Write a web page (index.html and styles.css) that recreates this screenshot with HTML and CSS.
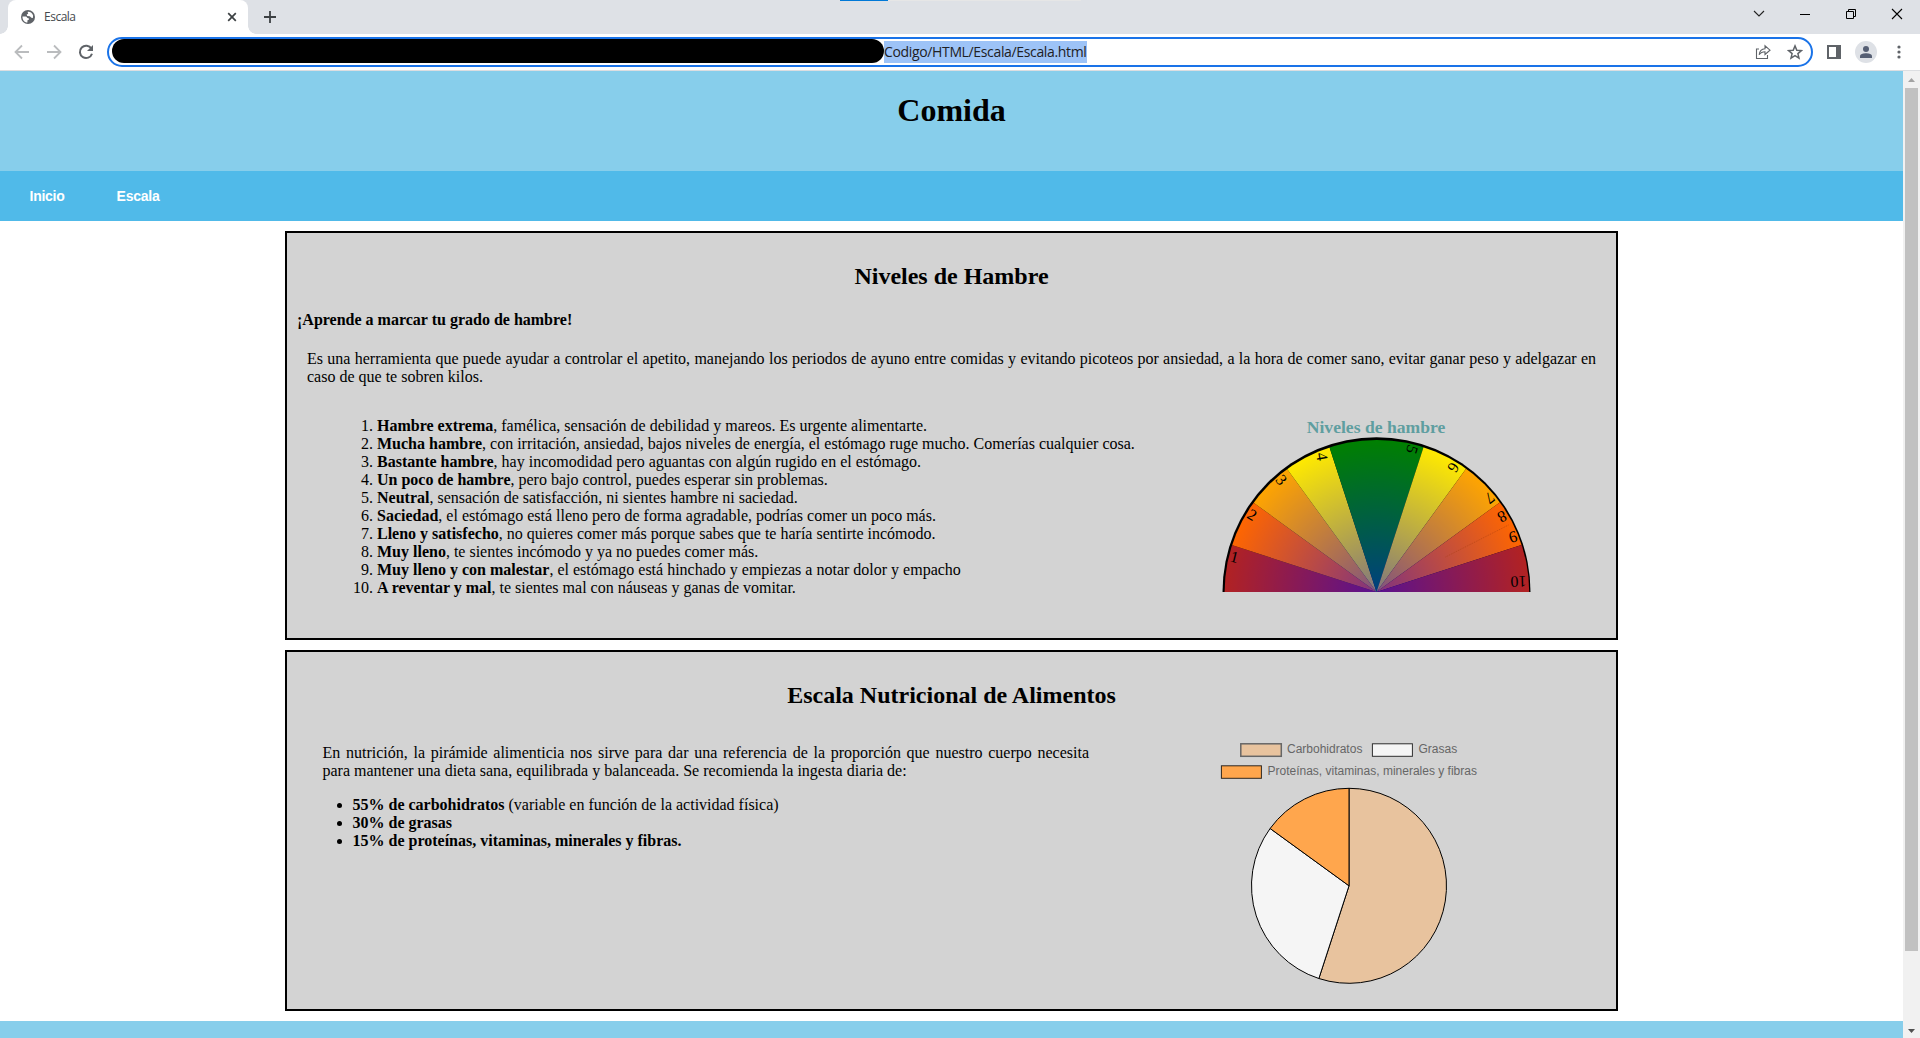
FILE: index.html
```html
<!DOCTYPE html>
<html lang="es">
<head>
<meta charset="utf-8">
<title>Escala</title>
<link rel="stylesheet" href="styles.css">
</head>
<body>
<div class="tabstrip">
  <div class="tab">
    <svg class="globe" width="14" height="14" viewBox="0 0 14 14"><circle cx="7" cy="7" r="7" fill="#5f6368"/><path d="M1.500 6.400H5.200l1.300 1.700 1.500.4-.2 1.300-1.300.5-.1 2.200C3.300 12.200 1.300 9.600 1.500 6.400z" fill="#fff"/><path d="M6.600 1.900c2.300-.5 4.800 1.200 5.500 3.500l-.2 2.500-1.500-.2-1.600-1.400L6.200 6 5.700 4.400l1.500-.7z" fill="#fff"/></svg>
    <span class="tab-title">Escala</span>
    <svg width="10" height="10" viewBox="0 0 10 10"><path d="M1.200 1.200l7.600 7.600M8.800 1.200L1.200 8.800" stroke="#3c4043" stroke-width="1.700"/></svg>
  </div>
  <svg class="newtab" width="12" height="12" viewBox="0 0 12 12"><path d="M6 0v12M0 6h12" stroke="#3c4043" stroke-width="1.800"/></svg>
  <div class="wincontrols">
    <svg width="12" height="12" viewBox="0 0 12 12"><path d="M1 3l5 5 5-5" fill="none" stroke="#222" stroke-width="1.100"/></svg>
    <svg width="12" height="12" viewBox="0 0 12 12"><path d="M1 6.500h10" stroke="#000"/></svg>
    <svg width="12" height="12" viewBox="0 0 12 12"><path d="M1.500 3.500h7v7h-7zM3.500 3.500v-2h7v7h-2" fill="none" stroke="#000"/></svg>
    <svg width="12" height="12" viewBox="0 0 12 12"><path d="M1 1l10 10M11 1L1 11" stroke="#000" stroke-width="1.100"/></svg>
  </div>
  <div class="loading"><i></i></div>
</div>
<div class="toolbar">
  <svg width="16" height="16" viewBox="0 0 16 16"><path d="M15 8H2M8 1.500L1.500 8 8 14.500" fill="none" stroke="#babcbe" stroke-width="1.800"/></svg>
  <svg width="16" height="16" viewBox="0 0 16 16"><path d="M1 8h13M8 1.500L14.500 8 8 14.500" fill="none" stroke="#babcbe" stroke-width="1.800"/></svg>
  <svg width="16" height="16" viewBox="0 0 16 16"><path d="M13.400 4.600A6.200 6.200 0 1 0 14 9.800" fill="none" stroke="#5f6368" stroke-width="2"/><path d="M15 1v6H9z" fill="#5f6368"/></svg>
  <div class="omnibox">
    <div class="redacted"></div>
    <span class="url">Codigo/HTML/Escala/Escala.html</span>
    <svg class="share" width="16" height="16" viewBox="0 0 16 16"><path d="M4 5H1.500v9.500h11V11" fill="none" stroke="#5f6368" stroke-width="1.100"/><path d="M4.200 10.800C4.600 7 6.600 5 10 4.800V1.800l5 4.400-5 4.300V7.700c-2.800 0-4.500 1-5.800 3.100z" fill="none" stroke="#5f6368" stroke-width="1.100"/></svg>
    <svg width="16" height="16" viewBox="0 0 16 16"><path d="M8 1.900l1.800 4.300 4.600.4-3.500 3 1.100 4.500-4-2.400-4 2.400 1.100-4.500-3.500-3 4.600-.4z" fill="none" stroke="#5f6368" stroke-width="1.500"/></svg>
  </div>
  <svg class="panel" width="14" height="14" viewBox="0 0 14 14"><path d="M0 0h14v14H0zM2 2v10h7V2z" fill="#5f6368" fill-rule="evenodd"/></svg>
  <svg class="avatar" width="22" height="22" viewBox="0 0 22 22"><circle cx="11" cy="11" r="11" fill="#dee1e6"/><circle cx="11" cy="8" r="3" fill="#565f74"/><path d="M5 17v-1.800C5 13 8.500 12.300 11 12.300s6 .7 6 2.900V17z" fill="#565f74"/></svg>
  <svg class="dots" width="4" height="14" viewBox="0 0 4 14"><g fill="#5f6368"><circle cx="2" cy="2" r="1.600"/><circle cx="2" cy="7" r="1.600"/><circle cx="2" cy="12" r="1.600"/></g></svg>
</div>
<div class="viewport">
  <div class="page">
    <header class="banner"><h1>Comida</h1></header>
    <nav class="menu"><a>Inicio</a><a>Escala</a></nav>
    <section class="card levels">
      <h2>Niveles de Hambre</h2>
      <h4>¡Aprende a marcar tu grado de hambre!</h4>
      <p class="intro">Es una herramienta que puede ayudar a controlar el apetito, manejando los periodos de ayuno entre comidas y evitando picoteos por ansiedad, a la hora de comer sano, evitar ganar peso y adelgazar en caso de que te sobren kilos.</p>
      <div class="columns">
        <ol>
          <li><b>Hambre extrema</b>, famélica, sensación de debilidad y mareos. Es urgente alimentarte.</li>
          <li><b>Mucha hambre</b>, con irritación, ansiedad, bajos niveles de energía, el estómago ruge mucho. Comerías cualquier cosa.</li>
          <li><b>Bastante hambre</b>, hay incomodidad pero aguantas con algún rugido en el estómago.</li>
          <li><b>Un poco de hambre</b>, pero bajo control, puedes esperar sin problemas.</li>
          <li><b>Neutral</b>, sensación de satisfacción, ni sientes hambre ni saciedad.</li>
          <li><b>Saciedad</b>, el estómago está lleno pero de forma agradable, podrías comer un poco más.</li>
          <li><b>Lleno y satisfecho</b>, no quieres comer más porque sabes que te haría sentirte incómodo.</li>
          <li><b>Muy lleno</b>, te sientes incómodo y ya no puedes comer más.</li>
          <li><b>Muy lleno y con malestar</b>, el estómago está hinchado y empiezas a notar dolor y empacho</li>
          <li><b>A reventar y mal</b>, te sientes mal con náuseas y ganas de vomitar.</li>
        </ol>
        <div class="gauge">
          <div class="gauge-title">Niveles de hambre</div>
          <svg class="dial" width="310" height="155" viewBox="-155.5 -155 310 155">
            <defs>
              <radialGradient id="core" gradientUnits="userSpaceOnUse" cx="0" cy="0" r="153"><stop offset="0" stop-color="#00f" stop-opacity=".5"/><stop offset="1" stop-color="#00f" stop-opacity="0"/></radialGradient>
              <clipPath id="half"><circle cx="0.400" cy="0.200" r="152.300"/></clipPath>
            </defs>
            <ellipse rx="154" ry="154.800"/>
            <g clip-path="url(#half)">
              <path fill="#b22222" d="M0 0H-170V-55.200z"/>
              <path fill="#ff6600" d="M0 0L-170-55.200V-123.500z"/>
              <path fill="#ffa500" d="M0 0L-170-123.500-140-192.700z"/>
              <path fill="#ffea00" d="M0 0L-140-192.700-62.600-192.700z"/>
              <path fill="#008000" d="M0 0L-62.600-192.700H62.600z"/>
              <path fill="#ffea00" d="M0 0L62.600-192.700H140z"/>
              <path fill="#ffa500" d="M0 0L140-192.700 170-123.500z"/>
              <path fill="#ff6600" d="M0 0L170-123.500V-55.200z"/>
              <path fill="#b22222" d="M0 0L170-55.200V0z"/>
              <rect x="-155" y="-155" width="310" height="155" fill="url(#core)"/>
              <path d="M69-35L132-67" stroke="#a33c10" stroke-width=".5" stroke-dasharray="1 1"/>
            </g>
            <g class="marks">
              <text transform="translate(-142 -35) rotate(14)" y="5.300">1</text>
              <text transform="translate(-124.500 -77) rotate(30)" y="5.300">2</text>
              <text transform="translate(-95 -112) rotate(50)" y="5.300">3</text>
              <text transform="translate(-54.500 -135.500) rotate(80)" y="5.300">4</text>
              <text transform="translate(35.500 -142.500) rotate(108)" y="5.300">5</text>
              <text transform="translate(77 -124.500) rotate(122)" y="5.300">6</text>
              <text transform="translate(113 -94) rotate(142)" y="5.300">7</text>
              <text transform="translate(125.500 -75.500) rotate(153)" y="5.300">8</text>
              <text transform="translate(136.500 -55) rotate(163)" y="5.300">9</text>
              <text transform="translate(142 -10.500) rotate(178)" y="5.300">10</text>
            </g>
          </svg>
        </div>
      </div>
    </section>
    <section class="card nutrition">
      <h2>Escala Nutricional de Alimentos</h2>
      <div class="columns">
        <div class="advice">
          <p>En nutrición, la pirámide alimenticia nos sirve para dar una referencia de la proporción que nuestro cuerpo necesita para mantener una dieta sana, equilibrada y balanceada. Se recomienda la ingesta diaria de:</p>
          <ul>
            <li><b>55% de carbohidratos</b> (variable en función de la actividad física)</li>
            <li><b>30% de grasas</b></li>
            <li><b>15% de proteínas, vitaminas, minerales y fibras.</b></li>
          </ul>
        </div>
        <svg class="pie" width="300" height="255" viewBox="0 0 300 255">
          <g stroke="#000" stroke-opacity=".8">
            <rect x="40.800" y="3.800" width="40.500" height="12.500" fill="#e8c39e" stroke="#666" stroke-opacity="1" stroke-width="1.500"/>
            <rect x="172.400" y="3.800" width="40" height="12.500" fill="#f5f5f5"/>
            <rect x="21.400" y="25.800" width="40" height="12.500" fill="#ffa64d"/>
          </g>
          <g class="legend">
            <text x="87" y="13">Carbohidratos</text>
            <text x="218.500" y="13">Grasas</text>
            <text x="67.500" y="35">Proteínas, vitaminas, minerales y fibras</text>
          </g>
          <g transform="translate(149 145.800)" stroke="#000" stroke-linejoin="round">
            <path fill="#e8c39e" d="M0 0V-97.500A97.500 97.500 0 1 1-30.130 92.730z"/>
            <path fill="#f5f5f5" d="M0 0L-30.130 92.730A97.500 97.500 0 0 1-78.880-57.310z"/>
            <path fill="#ffa64d" d="M0 0L-78.880-57.310A97.500 97.500 0 0 1 0-97.500z"/>
          </g>
        </svg>
      </div>
    </section>
    <footer class="foot"></footer>
  </div>
  <div class="scrollbar">
    <svg width="17" height="17" viewBox="0 0 17 17"><path d="M5 11h7L8.500 7z" fill="#a3a3a3"/></svg>
    <div class="thumb"></div>
    <svg class="down" width="17" height="17" viewBox="0 0 17 17"><path d="M5 8h7l-3.500 4z" fill="#505050"/></svg>
  </div>
</div>
</body>
</html>
```
FILE: styles.css
```css
* { box-sizing: border-box; }
body {
  margin: 0;
  height: 1038px;
  overflow: hidden;
  display: flex;
  flex-direction: column;
  background: #fff;
  color: #000;
  font: 16px/18px "Liberation Serif", "Times New Roman", serif;
}
svg { display: block; flex: none; }

/* Browser frame */
.tabstrip {
  position: relative;
  flex: none;
  height: 34px;
  padding-left: 8px;
  display: flex;
  background: #dee1e6;
}
.tab {
  position: relative;
  width: 240px;
  padding: 0 11px 0 13px;
  display: flex;
  align-items: center;
  border-radius: 8px 8px 0 0;
  background: #fff;
}
.tab::before, .tab::after {
  content: "";
  position: absolute;
  bottom: 0;
  width: 8px;
  height: 8px;
}
.tab::before { left: -8px; background: radial-gradient(circle at 0 0, transparent 7.500px, #fff 8px); }
.tab::after { right: -8px; background: radial-gradient(circle at 100% 0, transparent 7.500px, #fff 8px); }
.tab-title {
  margin-left: 9px;
  flex: 1;
  font: 12px/16px "Open Sans", sans-serif;
  letter-spacing: -.5px;
  color: #45494d;
}
.newtab { margin: 11px 0 0 16px; }
.wincontrols {
  margin: 8px 17px 0 auto;
  display: flex;
  gap: 34px;
}
.loading {
  position: absolute;
  left: 840px;
  top: 0;
  width: 241px;
  height: 1px;
  background: #e6e6e6;
}
.loading i { display: block; width: 48px; height: 1px; background: #0078d7; }
.toolbar {
  flex: none;
  height: 37px;
  padding: 3px 0 3px 14px;
  display: flex;
  align-items: center;
  gap: 16px;
  border-bottom: 1px solid #dcdee1;
}
.omnibox {
  flex: none;
  width: 1706px;
  height: 30px;
  margin-left: -3px;
  padding: 0 8px 0 3px;
  display: flex;
  align-items: center;
  border: 2px solid #1a73e8;
  border-radius: 15px;
}
.redacted {
  width: 772px;
  height: 24px;
  margin-top: -3px;
  border-radius: 12px;
  background: #000;
}
.url {
  width: 203px;
  margin-right: auto;
  font: 14px/22px "Open Sans", sans-serif;
  letter-spacing: -.35px;
  white-space: nowrap;
  color: #202124;
  background: #9dc3f7;
}
.share { margin-right: 16px; }
.panel { margin-left: -2px; }
.avatar { margin-left: -2px; }
.dots { margin-left: 4px; }

/* Page */
.viewport { flex: 1; min-height: 0; display: flex; }
.page { width: 1903px; overflow: hidden; }
.banner {
  height: 100px;
  padding-top: 21px;
  text-align: center;
  background: #87ceeb;
}
h1 { margin: 0; font-size: 32px; line-height: 37px; }
.menu {
  height: 50px;
  padding: 16px 29.500px;
  display: flex;
  gap: 52px;
  background: #50bae9;
  color: #fff;
  font: bold 14px/18px "Liberation Sans", Arial, sans-serif;
  letter-spacing: -.25px;
}
.card {
  width: 1333px;
  margin: 10px 0 0 285px;
  padding: 30px 10px 0;
  border: 2px solid #000;
  background: #d3d3d3;
}
h2 { margin: 0; font-size: 24px; line-height: 27px; text-align: center; }
h4 { margin: 21px 0; }
.levels { height: 409px; }
.nutrition { height: 361px; }
.intro { margin: 0 10px; text-align: justify; }
.columns { display: flex; }
.levels .columns { margin-top: 31px; }
ol { width: 924px; margin: 0; padding-left: 80px; }
.gauge { margin-top: 1px; width: 310px; }
.gauge-title {
  height: 19px;
  text-align: center;
  font-size: 17.600px;
  font-weight: bold;
  line-height: 18px;
  color: #5f9ea0;
}
.marks { font-size: 16px; text-anchor: middle; }
.nutrition .columns { margin-top: 31px; }
.advice { width: 766.500px; margin: 4px 111px 0 25.500px; }
.advice p { margin: 0 0 16px; text-align: justify; }
ul { margin: 0; padding-left: 30px; }
.legend { font: 12px "Liberation Sans", Arial, sans-serif; fill: #666; }
.foot { height: 100px; margin-top: 10px; background: #87ceeb; }
.scrollbar { width: 17px; display: flex; flex-direction: column; background: #f1f1f1; }
.thumb { width: 13px; height: 863px; margin-left: 2px; background: #c1c1c1; }
.down { margin-top: auto; }
```
